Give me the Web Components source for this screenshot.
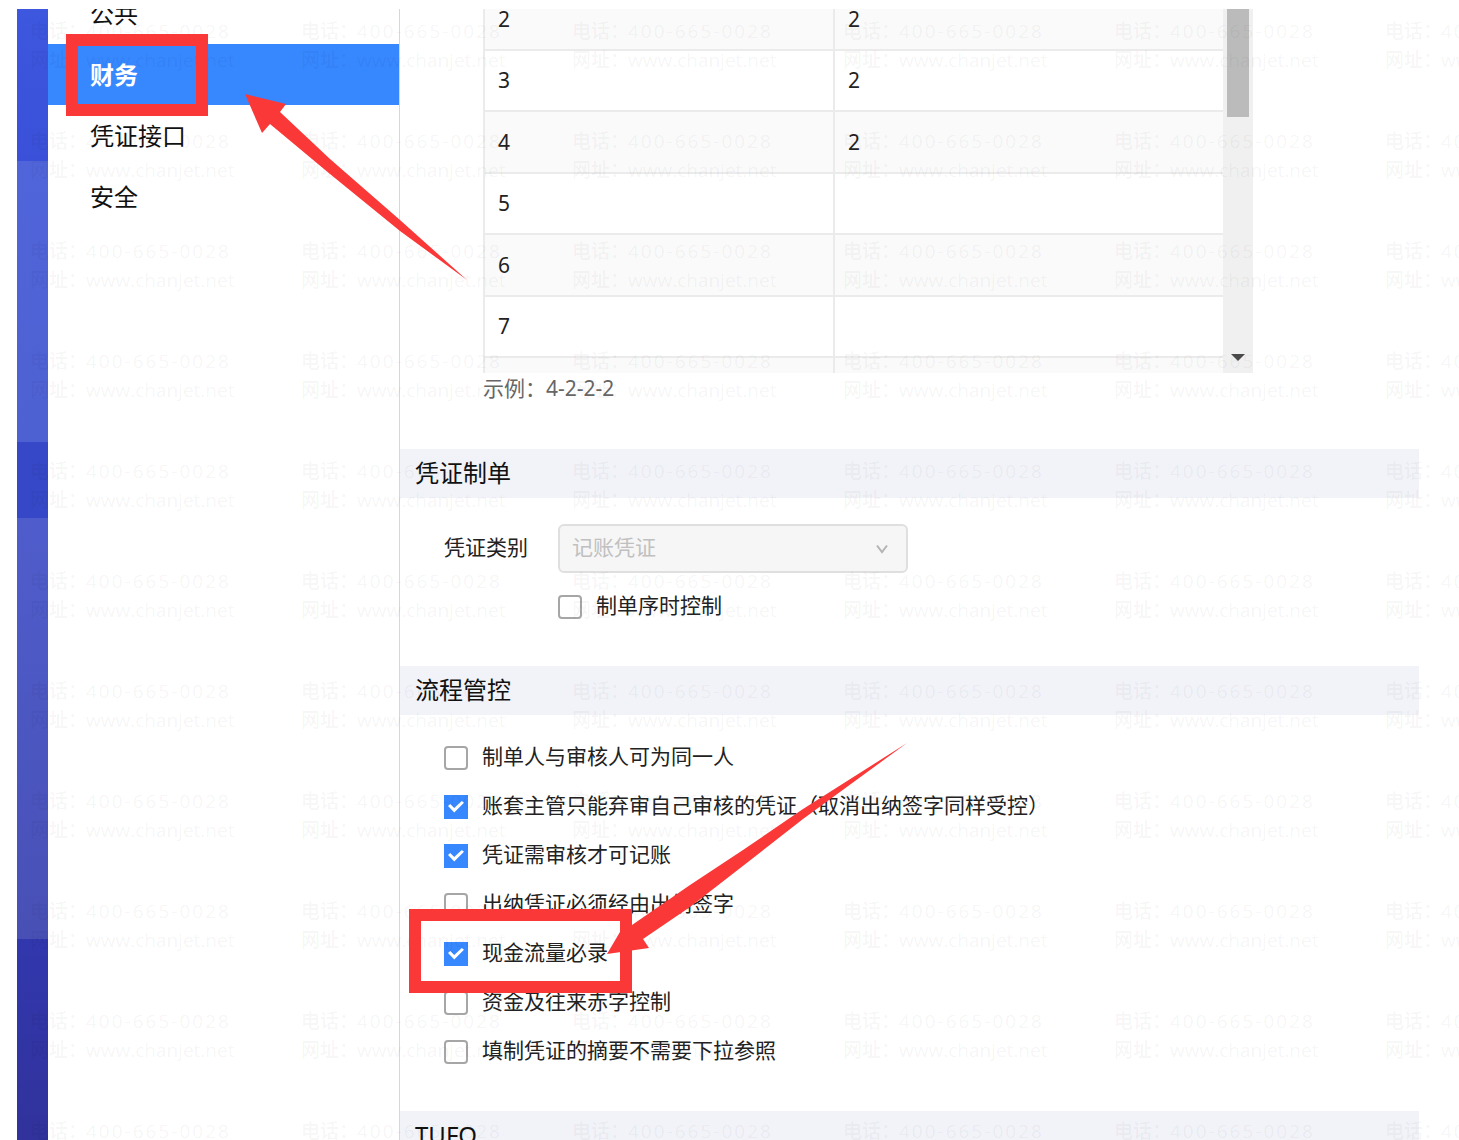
<!DOCTYPE html>
<html lang="zh-CN">
<head>
<meta charset="utf-8">
<title>财务</title>
<style>
  html, body { height: 100%; margin: 0; }
  body {
    overflow: hidden;
    background: #fff;
    color: #222;
    font: 21px/29px "Noto Sans", "Noto Sans CJK SC", sans-serif;
  }
</style>
</head>
<body>
<settings-page>
  <side-rail slot="rail"></side-rail>
  <side-menu slot="menu" items="公共,财务,凭证接口,安全" current="财务"></side-menu>
  <level-table values="2:2,3:2,4:2,5:,6:,7:,8:"></level-table>
  <setting-section heading="凭证制单" class="form">
    <select-field label="凭证类别" value="记账凭证"></select-field>
    <check-item class="indented">制单序时控制</check-item>
  </setting-section>
  <setting-section heading="流程管控">
    <check-item>制单人与审核人可为同一人</check-item>
    <check-item checked>账套主管只能弃审自己审核的凭证（取消出纳签字同样受控）</check-item>
    <check-item checked>凭证需审核才可记账</check-item>
    <check-item>出纳凭证必须经由出纳签字</check-item>
    <check-item checked>现金流量必录</check-item>
    <check-item>资金及往来赤字控制</check-item>
    <check-item>填制凭证的摘要不需要下拉参照</check-item>
  </setting-section>
  <setting-section heading="TUFO"></setting-section>
  <water-mark slot="overlay"></water-mark>
  <call-outs slot="overlay"></call-outs>
</settings-page>

<script>
const define = (name, html, setup) => {
  const template = document.createElement('template');
  template.innerHTML = html;
  customElements.define(name, class extends HTMLElement {
    constructor() {
      super();
      this.attachShadow({ mode: 'open' }).append(template.content.cloneNode(true));
    }
    connectedCallback() {
      if (setup && !this.ready) setup(this, this.shadowRoot);
      this.ready = true;
    }
  });
};

define('settings-page', `
  <style>
    :host { display: block; position: relative; height: 100vh; overflow: hidden; box-sizing: border-box; padding: 9px 0 0 17px; }
    .frame { display: flex; height: 100%; }
    main { flex: 1; min-width: 0; padding-right: 40px; overflow: hidden; border-left: 1px solid #d6d7db; }
  </style>
  <div class="frame">
    <slot name="rail"></slot>
    <slot name="menu"></slot>
    <main><slot></slot></main>
  </div>
  <slot name="overlay"></slot>`);

define('side-rail', `
  <style>
    :host { display: flex; flex-direction: column; flex: 0 0 31px; }
    div { flex: none; }
    .a { height: 152px; background: linear-gradient(#3d57de, #3a50d8); }
    .b { height: 281px; background: linear-gradient(#5065da, #4e61d2); }
    .c { height: 76px; background: #3648c7; }
    .d { height: 421px; background: linear-gradient(#4f5dcc, #4850b5); }
    .e { flex: 1; background: linear-gradient(#3137ad, #31329b); }
  </style>
  <div class="a"></div><div class="b"></div><div class="c"></div><div class="d"></div><div class="e"></div>`);

define('side-menu', `
  <style>
    :host { display: block; flex: 0 0 351px; overflow: hidden; }
    nav { margin-top: -26px; }
    a { display: block; height: 61px; padding-left: 42px; font-size: 24px; line-height: 61px; color: #111; text-decoration: none; }
    a[aria-current] { background: #3787ff; color: #fff; font-weight: 700; }
  </style>
  <nav></nav>`, (host, root) => {
  const nav = root.querySelector('nav');
  for (const name of host.getAttribute('items').split(',')) {
    const a = document.createElement('a');
    a.href = '#';
    a.textContent = name;
    if (name === host.getAttribute('current')) a.setAttribute('aria-current', 'page');
    nav.append(a);
  }
});

define('level-table', `
  <style>
    :host { display: block; padding: 0 0 61px 83px; }
    .box { display: flex; height: 364px; max-width: 770px; overflow: hidden; }
    .view { flex: 1; overflow: hidden; }
    table { width: 100%; margin-top: -20px; table-layout: fixed; border-collapse: separate; border-spacing: 0; border-left: 2px solid #ebebeb; box-sizing: border-box; }
    col:first-child { width: 350px; }
    tr { height: 62px; }
    tr:nth-child(even) { height: 61px; }
    tr:nth-child(odd) { background: #fafafa; }
    td { box-sizing: border-box; padding: 0 13px; border-bottom: 2px solid #ebebeb; }
    td:first-child { border-right: 2px solid #ebebeb; }
    .bar { flex: 0 0 30px; display: flex; flex-direction: column; justify-content: space-between; align-items: center; background: #f0f0f0; }
    .thumb { width: 22px; height: 108px; background: #bbb; }
    .bar svg { width: 14px; height: 7px; margin-bottom: 12px; }
    p { margin: 1px 0 0; line-height: 29px; height: 14px; color: #666; }
  </style>
  <div class="box">
    <div class="view"><table><colgroup><col><col></colgroup><tbody></tbody></table></div>
    <div class="bar"><div class="thumb"></div><svg viewBox="0 0 14 7"><path d="M0 0h14L7 7z" fill="#4a4a4a"/></svg></div>
  </div>
  <p>示例：4-2-2-2</p>`, (host, root) => {
  const body = root.querySelector('tbody');
  for (const pair of host.getAttribute('values').split(',')) {
    const row = body.insertRow();
    const [level, length] = pair.split(':');
    row.insertCell().textContent = level === '8' ? '' : level;
    row.insertCell().textContent = length;
  }
});

define('setting-section', `
  <style>
    :host { display: block; margin-bottom: 35px; }
    h2 { box-sizing: border-box; margin: 0; padding-left: 15px; height: 49px; background: #f2f3f8; color: #111; font-size: 24px; font-weight: 400; line-height: 47px; }
    .body { padding: 18px 0 0 44px; }
    :host(.form) .body { padding-top: 26px; }
  </style>
  <section><h2></h2><div class="body"><slot></slot></div></section>`, (host, root) => {
  root.querySelector('h2').textContent = host.getAttribute('heading');
});

define('select-field', `
  <style>
    :host { display: flex; align-items: center; margin-bottom: 9px; }
    label { width: 114px; padding-bottom: 2px; }
    .control { display: grid; align-items: center; width: 350px; }
    select, svg { grid-area: 1 / 1; }
    select { appearance: none; box-sizing: border-box; width: 100%; height: 49px; padding: 0 12px 2px; border: 2px solid #dfdfdf; border-radius: 6px; background: #f6f6f6; color: #c0c0c0; font: inherit; opacity: 1; }
    svg { justify-self: end; width: 12px; height: 10px; margin-right: 20px; }
  </style>
  <label for="s"></label>
  <div class="control">
    <select id="s" disabled><option></option></select>
    <svg viewBox="0 0 12 10"><path d="M1 1.5 6 8l5-6.500" fill="none" stroke="#b4b4b4" stroke-width="2"/></svg>
  </div>`, (host, root) => {
  root.querySelector('label').textContent = host.getAttribute('label');
  root.querySelector('option').textContent = host.getAttribute('value');
});

define('check-item', `
  <style>
    :host { display: block; }
    :host(.indented) { padding-left: 114px; }
    label { display: flex; align-items: center; gap: 14px; height: 49px; white-space: nowrap; }
    span { padding-bottom: 2px; }
    input { appearance: none; display: grid; place-items: center; flex: none; box-sizing: border-box; width: 24px; height: 24px; margin: 0; border: 2px solid #a6a6a6; border-radius: 4px; background: #fff; }
    input:checked { border-color: #3787ff; border-radius: 0; background: #3787ff; }
    input:checked::before { content: ""; width: 16px; height: 13px; background: #fff; clip-path: polygon(0 47%, 14% 31%, 39% 62%, 86% 7%, 100% 22%, 39% 96%); }
  </style>
  <label><input type="checkbox"><span><slot></slot></span></label>`, (host, root) => {
  root.querySelector('input').checked = host.hasAttribute('checked');
});

define('water-mark', `
  <style>
    :host { position: absolute; inset: 17px 0 0 30px; overflow: hidden; pointer-events: none; color: rgba(0, 0, 0, .055); }
    .grid { display: grid; grid-template-columns: repeat(6, 271px); grid-auto-rows: 110px; font: 500 19px/29px "Open Sans", "Noto Sans CJK SC", sans-serif; white-space: nowrap; }
    .line { display: grid; grid-template-columns: 56px auto; justify-content: start; }
    .phone { letter-spacing: 2px; }
  </style>
  <div class="grid" aria-hidden="true"></div>`, (host, root) => {
  root.querySelector('.grid').innerHTML = Array(66).fill(
    '<div><div class="line"><span>电话：</span><span class="phone">400-665-0028</span></div>' +
    '<div class="line"><span>网址：</span><span>www.chanjet.net</span></div></div>').join('');
});

define('call-outs', `
  <style>
    :host { position: absolute; inset: 0; pointer-events: none; }
    svg { display: block; width: 1000px; height: 1140px; }
  </style>
  <svg viewBox="0 0 1000 1140" fill="#fa3838">
    <rect x="72" y="40" width="130" height="70" fill="none" stroke="#fa3838" stroke-width="12"/>
    <path d="M245 94 286 104 280 112 330 159 400 220 467 280 400 231 330 174 270 124 262 133z"/>
    <rect x="415" y="915" width="211" height="72" fill="none" stroke="#fa3838" stroke-width="12"/>
    <path d="M607 954 627 920 632 925 690 885 743 850 803 809 907 743 803 819 757 855 690 907 643 939 649 948z"/>
  </svg>`);
</script>
</body>
</html>
